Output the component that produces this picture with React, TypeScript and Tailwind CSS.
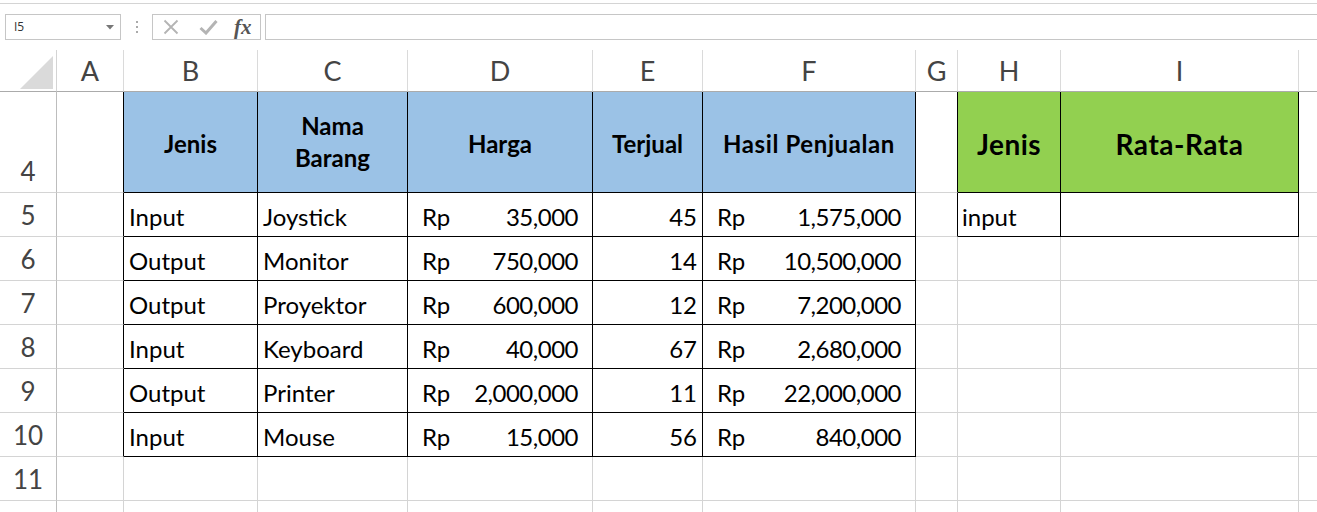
import React from 'react'

type Col = 'A' | 'B' | 'C' | 'D' | 'E' | 'F' | 'G' | 'H' | 'I' | 'J'

const COLS: Col[] = ['A', 'B', 'C', 'D', 'E', 'F', 'G', 'H', 'I', 'J']

const widths: Record<Col, string> = {
  A: 'w-[67px]',
  B: 'w-[134px]',
  C: 'w-[150px]',
  D: 'w-[185px]',
  E: 'w-[110px]',
  F: 'w-[213px]',
  G: 'w-[42px]',
  H: 'w-[103px]',
  I: 'w-[238px]',
  J: 'w-[120px]',
}

const rows = [
  { jenis: 'Input', nama: 'Joystick', harga: '35,000', terjual: '45', hasil: '1,575,000' },
  { jenis: 'Output', nama: 'Monitor', harga: '750,000', terjual: '14', hasil: '10,500,000' },
  { jenis: 'Output', nama: 'Proyektor', harga: '600,000', terjual: '12', hasil: '7,200,000' },
  { jenis: 'Input', nama: 'Keyboard', harga: '40,000', terjual: '67', hasil: '2,680,000' },
  { jenis: 'Output', nama: 'Printer', harga: '2,000,000', terjual: '11', hasil: '22,000,000' },
  { jenis: 'Input', nama: 'Mouse', harga: '15,000', terjual: '56', hasil: '840,000' },
]

const inTable = (r: number, c: Col | undefined) => {
  if (!c) return false
  if (r >= 4 && r <= 10 && 'BCDEF'.includes(c)) return true
  if (r >= 4 && r <= 5 && 'HI'.includes(c)) return true
  return false
}

function Money({ value }: { value: string }) {
  return (
    <div className="flex w-full items-end justify-between pl-[14px] pr-[14px]">
      <span>Rp</span>
      <span className="tracking-[-0.5px]">{value}</span>
    </div>
  )
}

function cellContent(r: number, c: Col): React.ReactNode {
  if (r === 4) {
    switch (c) {
      case 'B':
        return <span className="pt-[4px] font-bold">Jenis</span>
      case 'C':
        return (
          <span className="text-center font-bold leading-[32px]">
            Nama
            <br />
            Barang
          </span>
        )
      case 'D':
        return <span className="pt-[4px] font-bold">Harga</span>
      case 'E':
        return <span className="pt-[4px] font-bold">Terjual</span>
      case 'F':
        return <span className="pt-[4px] font-bold tracking-[0.6px]">Hasil Penjualan</span>
      case 'H':
        return <span className="pt-[4px] text-[28px] font-bold tracking-[0.5px]">Jenis</span>
      case 'I':
        return <span className="pt-[4px] text-[28px] font-bold tracking-[0.5px]">Rata-Rata</span>
    }
    return null
  }
  const d = rows[r - 5]
  if (r === 5 && c === 'H') return <span className="pl-[4px]">input</span>
  if (!d) return null
  switch (c) {
    case 'B':
      return <span className="pl-[5px]">{d.jenis}</span>
    case 'C':
      return <span className="pl-[5px]">{d.nama}</span>
    case 'D':
      return <Money value={d.harga} />
    case 'E':
      return <span className="ml-auto pr-[5px]">{d.terjual}</span>
    case 'F':
      return <Money value={d.hasil} />
  }
  return null
}

function Row({ r, label = true }: { r: number; label?: boolean }) {
  const h = r === 4 ? 'h-[101px]' : 'h-[44px]'
  return (
    <div className={`flex ${h}`}>
      <div className="flex w-[57px] shrink-0 items-end justify-center border-r border-b border-r-[#bdbdbd] border-b-[#d4d4d4] pb-[1px] text-[26px] text-[#444]">
        {label ? r : ''}
      </div>
      {COLS.map((c, i) => {
        const next = COLS[i + 1]
        const rightBlack = inTable(r, c) || inTable(r, next)
        const bottomBlack = inTable(r, c)
        let bg = 'bg-white'
        if (r === 4 && 'BCDEF'.includes(c)) bg = 'bg-[#9bc2e6]'
        if (r === 4 && 'HI'.includes(c)) bg = 'bg-[#92d050]'
        const align = r === 4 ? 'items-center justify-center' : 'items-end pb-[1px]'
        return (
          <div
            key={c}
            className={`flex shrink-0 overflow-hidden whitespace-nowrap border-r border-b ${widths[c]} ${bg} ${align} ${
              rightBlack ? 'border-r-black' : 'border-r-[#d4d4d4]'
            } ${bottomBlack ? 'border-b-black' : 'border-b-[#d4d4d4]'}`}
          >
            {cellContent(r, c)}
          </div>
        )
      })}
    </div>
  )
}

function FormulaBar() {
  return (
    <div className="flex h-[46px] flex-col">
      <div className="h-[4px] border-b border-[#d4d4d4]" />
      <div className="mt-[10px] flex h-[26px] items-stretch">
        <div className="ml-[5px] flex w-[116px] items-center justify-between border border-[#c6c6c6] pl-[8px] pr-[6px]">
          <span className="text-[12px] text-[#333]" style={{ fontFamily: '"Open Sans", sans-serif' }}>
            I5
          </span>
          <svg width="8" height="5" viewBox="0 0 8 5">
            <path d="M0 0 L8 0 L4 4.5 Z" fill="#777" />
          </svg>
        </div>
        <div className="flex w-[31px] flex-col items-center justify-center gap-[3px]">
          <span className="h-[2px] w-[2px] bg-[#aaa]" />
          <span className="h-[2px] w-[2px] bg-[#aaa]" />
          <span className="h-[2px] w-[2px] bg-[#aaa]" />
        </div>
        <div className="flex w-[109px] items-center border border-[#c6c6c6]">
          <svg className="ml-[10px]" width="16" height="16" viewBox="0 0 16 16">
            <path d="M1.5 1.5 L14.5 14.5 M14.5 1.5 L1.5 14.5" stroke="#b4b4b4" strokeWidth="1.8" />
          </svg>
          <svg className="ml-[20px]" width="19" height="16" viewBox="0 0 19 16">
            <path d="M1.5 9 L7 14 L17.5 2" stroke="#b4b4b4" strokeWidth="3" fill="none" />
          </svg>
          <span
            className="ml-[16px] text-[21px] font-bold italic leading-none text-[#555]"
            style={{ fontFamily: '"Liberation Serif", serif' }}
          >
            fx
          </span>
        </div>
        <div className="ml-[4px] flex-1 border border-r-0 border-[#c6c6c6]" />
      </div>
    </div>
  )
}

function HeaderRow() {
  return (
    <div className="flex h-[46px] pt-[4px]">
      <div className="relative w-[57px] shrink-0 border-r border-b border-r-[#d4d4d4] border-b-[#ababab]">
        <svg className="absolute left-[20px] top-[6px]" width="33" height="33" viewBox="0 0 33 33">
          <path d="M33 0 L33 33 L0 33 Z" fill="#dadada" />
        </svg>
      </div>
      {COLS.map((c) => (
        <div
          key={c}
          className={`flex shrink-0 items-center justify-center border-r border-b border-r-[#dadada] border-b-[#ababab] pt-[2px] text-[27px] text-[#444] ${widths[c]}`}
        >
          {c === 'J' ? '' : c}
        </div>
      ))}
    </div>
  )
}

export default function App() {
  return (
    <div
      className="h-[512px] w-[1317px] overflow-hidden bg-white text-[24px] text-black"
      style={{ fontFamily: 'Lato, "Noto Sans", sans-serif' }}
    >
      <FormulaBar />
      <HeaderRow />
      {[4, 5, 6, 7, 8, 9, 10, 11].map((r) => (
        <Row key={r} r={r} />
      ))}
      <Row r={12} label={false} />
    </div>
  )
}
